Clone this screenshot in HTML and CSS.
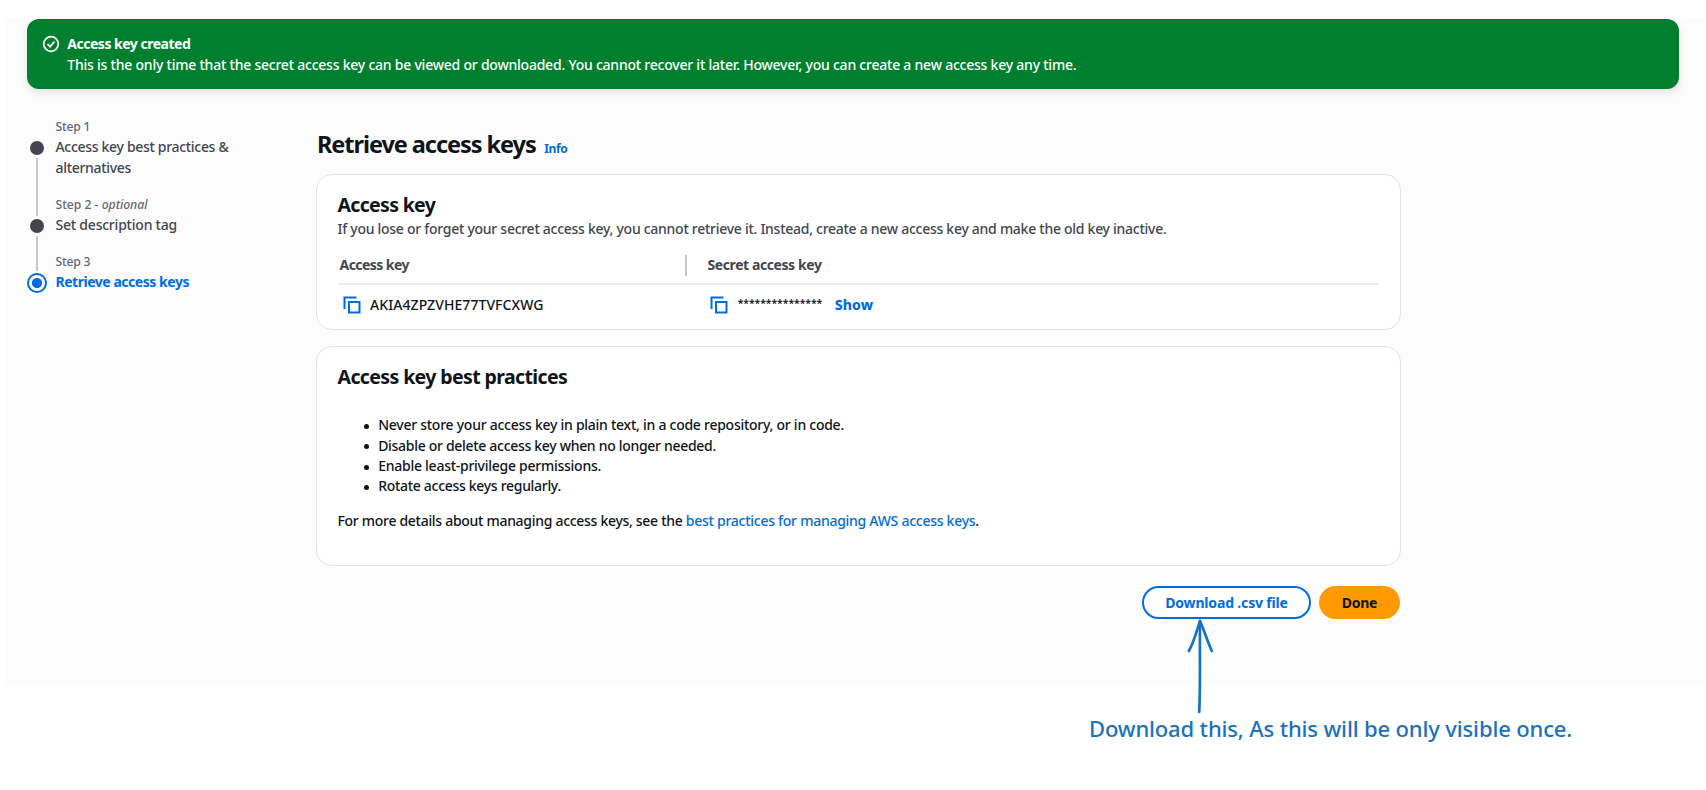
FILE: index.html
```html
<!DOCTYPE html>
<html lang="en"><head><meta charset="utf-8"><title>Retrieve access keys</title><link rel="stylesheet" href="styles.css"></head>
<body>
<div class="page">
  <div class="flash">
    <svg class="flash-icon" width="18" height="18" viewBox="0 0 18 18"><circle cx="9" cy="9" r="7.3"/><path d="M5.5 9.2 8.1 11.6 12.4 6.6"/></svg>
    <div class="flash-body">
      <div class="flash-title">Access key created</div>
      <div class="flash-text">This is the only time that the secret access key can be viewed or downloaded. You cannot recover it later. However, you can create a new access key any time.</div>
    </div>
  </div>
  <div class="columns">
    <ol class="steps">
      <li class="step">
        <div class="marker"><i class="pre"></i><i class="dot"></i><i class="post"></i></div>
        <div class="step-body"><div class="step-label">Step 1</div><div class="step-name long">Access key best practices &amp;<br>alternatives</div></div>
      </li>
      <li class="step">
        <div class="marker"><i class="pre line"></i><i class="dot"></i><i class="post"></i></div>
        <div class="step-body"><div class="step-label optional">Step 2 - <em>optional</em></div><div class="step-name">Set description tag</div></div>
      </li>
      <li class="step">
        <div class="marker"><i class="pre line short"></i><i class="ring"></i></div>
        <div class="step-body"><div class="step-label">Step 3</div><div class="step-name current">Retrieve access keys</div></div>
      </li>
    </ol>
    <main class="main">
      <div class="title-row"><h1>Retrieve access keys</h1><a class="info">Info</a></div>
      <section class="card key-card">
        <h2 class="key-title">Access key</h2>
        <p class="desc">If you lose or forget your secret access key, you cannot retrieve it. Instead, create a new access key and make the old key inactive.</p>
        <div class="row head"><div class="cell first">Access key</div><div class="cell second">Secret access key</div></div>
        <div class="row values">
          <div class="cell first"><svg class="copy" width="18" height="18" viewBox="0 0 18 18"><path d="M1.5 13V1.5H13.5M6 6h10.5v10.5H6z"/></svg><span class="key-id">AKIA4ZPZVHE77TVFCXWG</span></div>
          <div class="cell second"><svg class="copy" width="18" height="18" viewBox="0 0 18 18"><path d="M1.5 13V1.5H13.5M6 6h10.5v10.5H6z"/></svg><span class="stars">***************</span><a class="show">Show</a></div>
        </div>
      </section>
      <section class="card tips-card">
        <h2>Access key best practices</h2>
        <ul class="tips">
          <li>Never store your access key in plain text, in a code repository, or in code.</li>
          <li class="tight">Disable or delete access key when no longer needed.</li>
          <li>Enable least-privilege permissions.</li>
          <li class="tight">Rotate access keys regularly.</li>
        </ul>
        <p class="more">For more details about managing access keys, see the <a>best practices for managing AWS access keys</a>.</p>
      </section>
      <div class="actions"><button class="btn download">Download .csv file</button><button class="btn done">Done</button></div>
    </main>
  </div>
</div>
<svg class="arrow" width="32" height="102" viewBox="0 0 32 102"><path d="M15.2 96C16.6 70 15.6 40 16 5"/><path d="M4.8 35C8.8 29 13 14 16 5C20 14 23 24 27.8 35"/></svg>
<p class="note">Download this, As this will be only visible once.</p>
</body></html>
```
FILE: styles.css
```css
* { box-sizing: border-box; }
body { margin: 0; height: 790px; overflow: hidden; position: relative; background: #fff; color: #0f141a; font: 500 14px/20.33px "Noto Sans", sans-serif; }
h1, h2, p, ul, ol { margin: 0; padding: 0; font-weight: inherit; }
.page { margin: 18px 2px 0 5px; height: 667px; padding: 1px 25.5px 0 22px; background: #fcfcfc; }
.flash { display: flex; height: 69.5px; padding: 14.9px 16px 0; border-radius: 12px; background: #00802f; color: #fff; white-space: nowrap; box-shadow: 0 4px 8px 0 #0007161a; }
.flash-icon { flex: none; margin: 1px 7px 0 -.7px; fill: none; stroke: #fff; stroke-width: 1.8; }
.flash-title { font-weight: 700; letter-spacing: -.49px; }
.flash-text { letter-spacing: -.226px; padding-top: .4px; }
.columns { display: flex; }
.steps { width: 289px; padding-top: 28.6px; list-style: none; color: #424650; }
.step { display: flex; gap: 8.5px; }
.step-body { padding-bottom: 16.6px; }
.step-label { font-size: 12.2px; color: #656871; letter-spacing: -.22px; }
.step-label.optional { letter-spacing: -.021px; }
.step-name { letter-spacing: -.22px; }
.step-name.long { letter-spacing: -.312px; }
.step-name.current { color: #006ce0; font-weight: 700; letter-spacing: -.466px; }
.marker { display: flex; flex-direction: column; align-items: center; width: 20px; }
.marker i { display: block; flex: none; }
.pre { width: 2px; height: 21.4px; margin-bottom: 2.8px; }
.line, .post { background: #c6c6cd; }
.short { height: 19px; margin-bottom: 2px; }
.dot { width: 14px; height: 14px; border-radius: 50%; background: #424650; }
.marker .post { flex: 1; width: 2px; margin-top: 2.7px; }
.ring { width: 20px; height: 20px; border: 2px solid #006ce0; border-radius: 50%; background: radial-gradient(circle, #006ce0 4.7px, transparent 5.4px); }
.main { width: 1084.5px; padding-top: 40.4px; }
.title-row { display: flex; align-items: baseline; gap: 8.5px; padding-left: 1px; height: 45.1px; }
h1 { font-size: 23.5px; line-height: 30px; font-weight: 700; letter-spacing: -1.05px; white-space: nowrap; }
.info { font-size: 12px; font-weight: 700; color: #006ce0; letter-spacing: -.331px; }
.card { border: 1px solid #e4e4e8; border-radius: 16px; background: #fff; padding: 17px 20.5px 0; }
.key-card { height: 156.5px; margin-bottom: 16px; }
.tips-card { height: 219.5px; }
h2 { font-size: 19.5px; line-height: 25px; font-weight: 700; letter-spacing: -.61px; }
.key-title { letter-spacing: -.68px; }
.desc { margin-top: 2px; color: #424650; letter-spacing: -.273px; }
.row { display: flex; }
.head { margin-top: 15.9px; height: 29.6px; border-bottom: 2px solid #ebebf0; color: #424650; font-weight: 700; }
.head .first { width: 349.5px; padding-left: 2px; height: 20.33px; border-right: 2px solid #c6c6cd; letter-spacing: -.545px; }
.head .second { padding-left: 20.5px; letter-spacing: -.412px; }
.values { padding-top: 10.4px; }
.cell { display: flex; white-space: nowrap; }
.values .first { width: 372.7px; padding-left: 5px; }
.copy { flex: none; margin: .6px 9.5px 0 0; fill: none; stroke: #006ce0; stroke-width: 2; }
.key-id { letter-spacing: .073px; }
.stars { font-size: 10.5px; font-weight: 600; letter-spacing: -.1px; margin-top: -2px; }
.show { margin-left: 12.5px; color: #006ce0; font-weight: 800; letter-spacing: .129px; }
.tips { padding: 26px 0 0 40.7px; list-style: none; letter-spacing: -.26px; }
.tips li { display: flex; align-items: center; }
.tips li.tight { letter-spacing: -.304px; }
.tips li::before { content: ""; width: 5px; height: 5px; margin: 2px 9px 0 -14px; border-radius: 50%; background: #0f141a; }
.more { margin-top: 14.7px; letter-spacing: -.295px; }
.more a { color: #006ce0; letter-spacing: -.265px; }
.actions { display: flex; justify-content: flex-end; gap: 8px; margin-top: 20.3px; padding-right: .5px; }
.btn { height: 32.5px; border-radius: 17px; font: 700 14px/20.33px "Noto Sans", sans-serif; padding: 1px 0 0; }
.download { width: 169px; border: 2px solid #006ce0; background: #fff; color: #006ce0; letter-spacing: -.169px; }
.done { width: 81px; border: 0; background: #ff9900; color: #0f141a; letter-spacing: -.292px; }
.arrow { position: absolute; left: 1184px; top: 616px; fill: none; stroke: #1971c2; stroke-width: 2.7; stroke-linecap: round; stroke-linejoin: round; }
.note { position: absolute; left: 1089px; top: 714px; color: #1971c2; font: 500 22px/28px "Excalifont", "Noto Sans", sans-serif; letter-spacing: -.15px; white-space: nowrap; }
```
